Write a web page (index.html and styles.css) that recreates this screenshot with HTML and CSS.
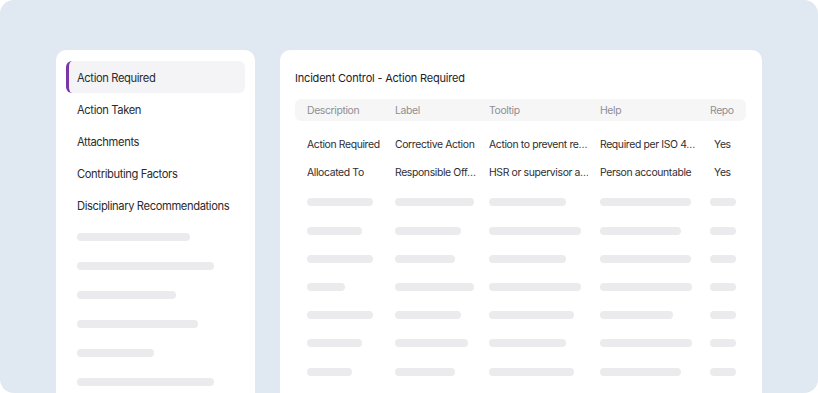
FILE: index.html
```html
<!DOCTYPE html>
<html>
<head>
<meta charset="utf-8">
<link rel="stylesheet" href="styles.css">
</head>
<body>
<div class="frame">
  <aside class="side">
    <div class="nav-item active">Action Required</div>
    <div class="nav-item">Action Taken</div>
    <div class="nav-item">Attachments</div>
    <div class="nav-item">Contributing Factors</div>
    <div class="nav-item">Disciplinary Recommendations</div>
    <div class="side-skel">
      <span class="bar" style="width:113px"></span>
      <span class="bar" style="width:137px"></span>
      <span class="bar" style="width:99px"></span>
      <span class="bar" style="width:121px"></span>
      <span class="bar" style="width:77px"></span>
      <span class="bar" style="width:137px"></span>
    </div>
  </aside>
  <main class="main">
    <h1 class="title">Incident Control - Action Required</h1>
    <div class="table">
      <div class="thead row">
        <div>Description</div><div>Label</div><div>Tooltip</div><div>Help</div><div>Repo</div>
      </div>
      <div class="row">
        <div>Action Required</div><div>Corrective Action</div><div>Action to prevent re…</div><div>Required per ISO 4…</div><div class="yes">Yes</div>
      </div>
      <div class="row">
        <div>Allocated To</div><div>Responsible Off…</div><div>HSR or supervisor a…</div><div>Person accountable</div><div class="yes">Yes</div>
      </div>
      <div class="row skel"><div><span class="bar" style="width:66px"></span></div><div><span class="bar" style="width:79px"></span></div><div><span class="bar" style="width:77px"></span></div><div><span class="bar" style="width:91px"></span></div><div><span class="bar" style="width:26px"></span></div></div>
      <div class="row skel"><div><span class="bar" style="width:55px"></span></div><div><span class="bar" style="width:66px"></span></div><div><span class="bar" style="width:92px"></span></div><div><span class="bar" style="width:81px"></span></div><div><span class="bar" style="width:26px"></span></div></div>
      <div class="row skel"><div><span class="bar" style="width:66px"></span></div><div><span class="bar" style="width:60px"></span></div><div><span class="bar" style="width:77px"></span></div><div><span class="bar" style="width:91px"></span></div><div><span class="bar" style="width:26px"></span></div></div>
      <div class="row skel"><div><span class="bar" style="width:38px"></span></div><div><span class="bar" style="width:79px"></span></div><div><span class="bar" style="width:92px"></span></div><div><span class="bar" style="width:92px"></span></div><div><span class="bar" style="width:26px"></span></div></div>
      <div class="row skel"><div><span class="bar" style="width:66px"></span></div><div><span class="bar" style="width:66px"></span></div><div><span class="bar" style="width:85px"></span></div><div><span class="bar" style="width:73px"></span></div><div><span class="bar" style="width:26px"></span></div></div>
      <div class="row skel"><div><span class="bar" style="width:55px"></span></div><div><span class="bar" style="width:73px"></span></div><div><span class="bar" style="width:77px"></span></div><div><span class="bar" style="width:92px"></span></div><div><span class="bar" style="width:26px"></span></div></div>
      <div class="row skel"><div><span class="bar" style="width:45px"></span></div><div><span class="bar" style="width:60px"></span></div><div><span class="bar" style="width:85px"></span></div><div><span class="bar" style="width:81px"></span></div><div><span class="bar" style="width:26px"></span></div></div>
      <div class="row skel"><div><span class="bar" style="width:62px"></span></div><div><span class="bar" style="width:73px"></span></div><div><span class="bar" style="width:85px"></span></div><div><span class="bar" style="width:85px"></span></div><div><span class="bar" style="width:26px"></span></div></div>
    </div>
  </main>
</div>
</body>
</html>
```

FILE: styles.css
```css
* { box-sizing: border-box; }
html, body { margin: 0; padding: 0; background: #ffffff; }
body {
  font-family: Inter, "Noto Sans", sans-serif;
  width: 818px;
  height: 393px;
  overflow: hidden;
}
.frame {
  width: 818px;
  height: 393px;
  background: #e0e8f2;
  border-radius: 14px;
  overflow: hidden;
  display: flex;
  gap: 25px;
  padding: 50px 56px 0 56px;
}
.side {
  width: 199px;
  flex: none;
  background: #ffffff;
  border-radius: 10px 10px 0 0;
  padding: 11px 10px 0 10px;
  height: 360px;
}
.nav-item {
  height: 32px;
  display: flex;
  align-items: center;
  padding-top: 1px;
  padding-left: 11px;
  font-size: 11.2px;
  color: #2b2b2e;
  letter-spacing: -0.38px;
}
.nav-item.active {
  background: #f4f4f6;
  border-radius: 6px;
  border-left: 3px solid #7a36a8;
  padding-left: 8px;
}
.side-skel {
  display: flex;
  flex-direction: column;
  gap: 21px;
  padding: 12px 0 0 11px;
}
.bar {
  display: block;
  height: 8px;
  border-radius: 4px;
  background: #ebebed;
}
.main {
  width: 482px;
  flex: none;
  background: #ffffff;
  border-radius: 10px 10px 0 0;
  padding: 21px 16px 0 15px;
  height: 360px;
  overflow: hidden;
}
.title {
  margin: 0;
  font-size: 11px;
  line-height: 14px;
  font-weight: 400;
  color: #222226;
  letter-spacing: -0.2px;
}
.table {
  margin-top: 14px;
}
.row {
  display: grid;
  grid-template-columns: 88px 94px 111px 110px 48px;
  height: 28.2px;
  align-items: center;
  font-size: 10.4px;
  color: #2e2e32;
  letter-spacing: -0.36px;
  white-space: nowrap;
}
.row > div { padding-left: 12px; overflow: hidden; }
.thead {
  height: 22px;
  background: #f6f6f7;
  border-radius: 6px;
  color: #8e8e93;
  margin-bottom: 9px;
}
.skel { padding-top: 4px; }
.yes { padding-left: 16px !important; }
```
